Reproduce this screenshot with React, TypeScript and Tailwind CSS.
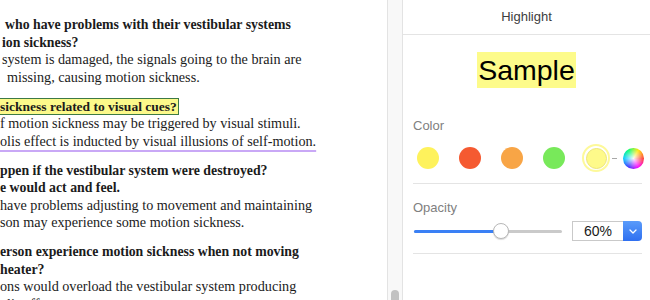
import React from "react";

const serif = { fontFamily: '"Liberation Serif", "Times New Roman", serif' };
const sans = { fontFamily: '"Liberation Sans", Arial, Helvetica, sans-serif' };

function Line({ children, pl = 0, bold = false }: { children: React.ReactNode; pl?: number; bold?: boolean }) {
  return (
    <div
      className={`whitespace-pre leading-[17.5px] ${bold ? "font-bold text-[13.8px]" : "text-[14.2px]"}`}
      style={{ paddingLeft: pl }}
    >
      {children}
    </div>
  );
}

export default function App() {
  const swatches = ["#fef25c", "#f55a31", "#f8a546", "#78e95a"];
  return (
    <div className="w-[650px] h-[300px] flex overflow-hidden bg-white">
      {/* Document */}
      <div className="w-[387px] shrink-0 h-full overflow-hidden text-[#1b1b1b] pt-[16px]" style={serif}>
        <div className="mb-[11.5px]">
          <Line bold pl={5}>who have problems with their vestibular systems</Line>
          <Line bold pl={2}>ion sickness?</Line>
          <Line pl={2}>system is damaged, the signals going to the brain are</Line>
          <Line pl={7}>missing, causing motion sickness.</Line>
        </div>
        <div className="mb-[11.5px]">
          <div className="leading-[17.5px] font-bold text-[13.5px] whitespace-pre">
            <span className="inline-block bg-[#fcf98a] border border-l-0 border-[#3d7a45] leading-[15px] pr-[1px]">sickness related to visual cues?</span>
          </div>
          <Line pl={0}>f motion sickness may be triggered by visual stimuli.</Line>
          <Line pl={0}>
            <span className="underline decoration-[#c9a8f6] decoration-2 underline-offset-[4px]">olis effect is inducted by visual illusions of self-motion.</span>
          </Line>
        </div>
        <div className="mb-[11.5px]">
          <Line bold pl={0}>ppen if the vestibular system were destroyed?</Line>
          <Line bold pl={0}>e would act and feel.</Line>
          <Line pl={0}>have problems adjusting to movement and maintaining</Line>
          <Line pl={0}>son may experience some motion sickness.</Line>
        </div>
        <div>
          <Line bold pl={0}>erson experience motion sickness when not moving</Line>
          <Line bold pl={0}>heater?</Line>
          <Line pl={0}>ons would overload the vestibular system producing</Line>
          <Line pl={0}>olis effect.</Line>
        </div>
      </div>

      {/* Scrollbar */}
      <div className="w-[16px] shrink-0 h-full bg-[#f8f8f8] border-l border-r border-[#e3e3e3] flex flex-col justify-end items-center overflow-hidden">
        <div className="w-[8px] h-[12px] bg-[#c2c2c2] rounded-t-full -mb-[2px]" />
      </div>

      {/* Panel */}
      <div className="flex-1 min-w-0 h-full flex flex-col" style={sans}>
        <div className="h-[35px] border-b border-[#e4e4e4] flex items-center justify-center text-[13px] text-[#3d3d3d]">
          Highlight
        </div>
        <div className="flex justify-center pt-[17px]">
          <span className="bg-[#fdfb8a] text-black text-[28.5px] leading-[36px] h-[36px] px-[1px]">Sample</span>
        </div>
        <div className="pl-[10px] pr-[8px] pt-[30px]">
          <div className="text-[13px] text-[#808080] leading-[16px]">Color</div>
          <div className="flex items-center h-[30px] mt-[9px] w-[235px]">
            {swatches.map((c) => (
              <div key={c} className="w-[42px] shrink-0 flex items-center">
                <div className="w-[22px] h-[22px] rounded-full ml-[4px]" style={{ background: c }} />
              </div>
            ))}
            <div className="w-[28px] h-[28px] shrink-0 rounded-full border-2 border-[#fdf99a] flex items-center justify-center ml-[1px]">
              <div className="w-[21px] h-[21px] rounded-full bg-[#fefa8a] border border-[#ece57a]" />
            </div>
            <div className="w-[5px] shrink-0 h-px bg-[#a8a8a8] ml-[2px]" />
            <div
              className="w-[21px] h-[21px] shrink-0 rounded-full ml-[6px]"
              style={{
                background:
                  "radial-gradient(circle, rgba(255,255,255,0.95) 0%, rgba(255,255,255,0) 70%), conic-gradient(from 90deg, #ff3b30, #ff00ff, #3b30ff, #00c8ff, #00ff6a, #ffe600, #ff3b30)",
              }}
            />
          </div>
          <div className="h-px bg-[#e4e4e4] mt-[10px]" />
          <div className="text-[13px] text-[#808080] leading-[16px] mt-[16px]">Opacity</div>
          <div className="flex items-center h-[20px] mt-[5px]">
            <div className="relative w-[148px] shrink-0 h-[3px] rounded-full bg-[#cacaca] ml-[1px]">
              <div className="absolute left-0 top-0 h-[3px] w-[87px] rounded-full bg-[#3a80f5]" />
              <div className="absolute left-[79px] top-[-7px] w-[16px] h-[16px] rounded-full bg-white border border-[#b8b8b8] shadow-[0_1px_1px_rgba(0,0,0,0.15)]" />
            </div>
            <div className="ml-auto flex h-[20px] w-[70px] shrink-0">
              <div className="flex-1 border border-r-0 border-[#c9c9c9] bg-white flex items-center justify-center text-[14px] text-[#1a1a1a]">
                60%
              </div>
              <div className="w-[19px] h-full rounded-r-[4px] bg-gradient-to-b from-[#5a9bfa] to-[#2f6ff0] flex items-center justify-center">
                <svg width="8" height="5" viewBox="0 0 8 5" fill="none">
                  <path d="M1 1l3 3 3-3" stroke="white" strokeWidth="1.3" strokeLinecap="round" strokeLinejoin="round" />
                </svg>
              </div>
            </div>
          </div>
          <div className="h-px bg-[#e4e4e4] mt-[12px]" />
        </div>
      </div>
    </div>
  );
}
